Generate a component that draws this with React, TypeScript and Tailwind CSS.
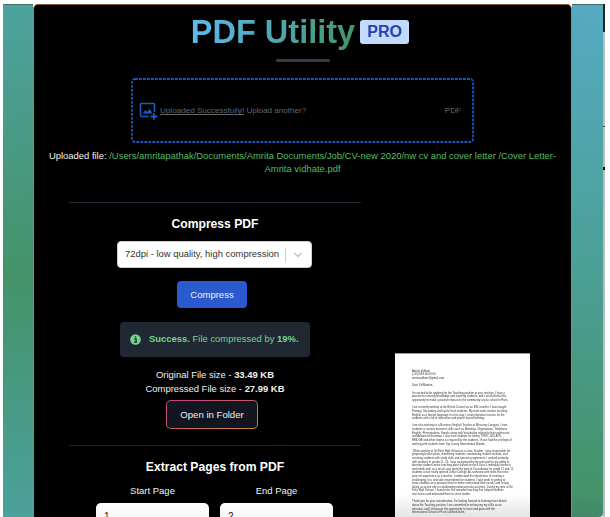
import React from "react";

const paragraphs: string[][] = [
  ["Amrita Vidhate", "(+33) 648 00 00 00", "amritavidhate@gmail.com"],
  ["Dear Sir/Madam,"],
  [
    "I'm excited to be applying for the Teaching position at your institute. I have a",
    "passion for sharing knowledge and inspiring students, and I am thrilled at the",
    "opportunity to make a positive impact on the community at you school in Paris.",
  ],
  [
    "I am currently working at the British Council as an ESL teacher. I have taught",
    "Primary, Secondary and Lycée level students. My main tasks involve teaching",
    "English as a foreign language in a fun way. I create dynamic lessons for the",
    "students with a lot of interactive and project based learning.",
  ],
  [
    "I am also working as a Business English Teacher at Mercurey Langues. I train",
    "students in various business skills such as Meetings, Negotiations, Telephone",
    "English, Presentations, Emails along with Vocabulary related to their profession",
    "and Advanced Grammar. I also train students for taking TOEIC, BULATS,",
    "BRIDGE and other exams as required by the students. I have had the privilege of",
    "working with students from Top Luxury International Brands.",
  ],
  [
    " While working at Sri Felix High School as a class Teacher, I was responsible for",
    "preparing lesson plans, monitoring students, maintaining student records, and",
    "assisting students with study skills and special assignments. I worked primarily",
    "with students in grades 8 - 12. I was recognized by my principal for my ability to",
    "develop student-centric teaching plans based on each class's individual interests",
    "and needs and, as a result, was given the post of Co-ordinator for grade 11 and 12",
    "students at our newly opened Junior College. As someone with more than nine",
    "years of experience as a teacher, I understand the importance of creating a",
    "challenging, fun, and safe environment for students. I take pride in getting to",
    "know students on a personal level to better understand their needs, and I enjoy",
    "taking an active role in coordinating extracurricular activities. During my time at Sri",
    "Felix High School, I found roles like remedial teaching that helped students",
    "real scores and motivated them to strive harder.",
  ],
  [
    "Thank you for your consideration. I'm looking forward to learning more details",
    "about the Teaching position. I am committed to enhancing my skills as an",
    "educator, and I'd treasure the opportunity to learn and grow with the",
    "International School of Paris talented team.",
  ],
];

function Letter() {
  return (
    <div className="mt-[177px] ml-[34px] h-[165px] w-[135px] shrink-0 overflow-hidden border-t border-[#999] bg-gradient-to-b from-white from-85% to-[#e4e4e4]">
      <div className="mt-[15px] ml-[16.5px] h-0 w-[460px] origin-top-left scale-25 text-[11.1px] leading-[14.4px] whitespace-pre text-[#333]">
        {paragraphs.map((lines, i) => (
          <div key={i} className="mb-[15px]">
            {lines.map((line) => (
              <div key={line}>{line}</div>
            ))}
          </div>
        ))}
      </div>
    </div>
  );
}

function UploadIcon() {
  return (
    <svg viewBox="0 0 19 18" className="h-[18px] w-[19px] shrink-0" fill="none">
      <path d="M9.5 14.5H2.500a1 1 0 0 1-1-1V2.500a1 1 0 0 1 1-1h12a1 1 0 0 1 1 1V10" stroke="#1d5cc6" strokeWidth="1.6" />
      <path d="M3.8 11.5 6.5 8l1.800 1.900L10.500 6.800l3.200 4.700Z" fill="#1d5cc6" />
      <path d="M15 11.200v6.600M11.700 14.500h6.600" stroke="#1d5cc6" strokeWidth="1.8" />
    </svg>
  );
}

function PageField({ label, value }: { label: string; value: string }) {
  return (
    <div className="w-[113px]">
      <div className="text-center text-[9.5px] leading-[14px]">{label}</div>
      <div className="mt-[5px] h-[27px] rounded-[5px] bg-gradient-to-b from-white to-[#ececf0] pt-[7px] pl-[8px] text-[10px] leading-[14px] text-[#222]">
        {value}
      </div>
    </div>
  );
}

export default function App() {
  return (
    <div className="flex h-[517px] w-[610px] overflow-hidden bg-white pt-[4px] pl-[3px] font-['Liberation_Sans',Arial,sans-serif] text-[#f0f0f0]">
      <div className="h-[513px] w-[30px] shrink-0 border-t border-[#3e706d] bg-[linear-gradient(176deg,#4da29e_0%,#44936a_53%,#4ba19b_100%)]" />
      <div className="h-[513px] w-[539px] shrink-0 overflow-hidden rounded-t-[5px] border border-b-0 border-[#c07c42] border-t-[#8a5a36] bg-black">
        <div className="flex h-[49px] justify-center pt-[7px] pr-[5px]">
          <h1 className="h-[43px] bg-gradient-to-r from-[#5db9f0] via-[#52a7b0] to-[#42946a] bg-clip-text text-[32.5px] leading-[41px] font-bold whitespace-nowrap text-transparent">
            PDF Utility
          </h1>
          <span className="mt-[8px] ml-[5px] h-[24px] w-[49px] rounded-[3px] bg-[#c3dafd] text-center text-[16px] leading-[24px] font-bold text-[#2544ad]">
            PRO
          </span>
        </div>
        <div className="mx-auto mt-[5px] h-[3px] w-[54px] rounded-full bg-[#343b4a]" />
        <div className="relative mt-[16px] ml-[97px] flex h-[65px] w-[343px] items-center pr-[13px] pl-[8px] text-[8.1px] text-[#666]">
          <svg className="absolute inset-0 h-[65px] w-[343px]" fill="none">
            <rect x="1" y="1" width="341" height="63" rx="3" stroke="#1957bd" strokeWidth="1.8" strokeDasharray="2.8 1.2" />
          </svg>
          <UploadIcon />
          <span className="mt-[2px] ml-[2px]">
            <span className="underline">Uploaded Successfully!</span> Upload another?
          </span>
          <span className="mt-[2px] ml-auto">PDF</span>
        </div>
        <p className="mt-[6px] text-center text-[9.45px] leading-[13px] whitespace-nowrap">
          Uploaded file:{" "}
          <span className="text-[#52bd62]">
            /Users/amritapathak/Documents/Amrita Documents/Job/CV-new 2020/nw cv and cover letter /Cover Letter-
            <br />
            Amrita vidhate.pdf
          </span>
        </p>
        <div className="mt-px flex pl-[35px]">
          <div className="w-[292px] shrink-0 pt-[26px]">
            <div className="h-px bg-[#242b38]" />
            <h2 className="mt-[12px] text-center text-[12.15px] leading-[18px] font-bold text-white">Compress PDF</h2>
            <div className="mt-[8px] ml-[48px] flex h-[27px] w-[195px] items-center rounded-[4px] border border-[#ccc] bg-white text-[#333]">
              <span className="ml-[7px] text-[9.45px] whitespace-nowrap">72dpi - low quality, high compression</span>
              <span className="ml-auto h-[14px] w-px bg-[#ccc]" />
              <svg viewBox="0 0 10 8" className="mr-[8px] ml-[7px] h-[8px] w-[10px] shrink-0" fill="none">
                <path d="m1.500 2 3.500 3.500L8.500 2" stroke="#c4c4c4" strokeWidth="1.5" />
              </svg>
            </div>
            <div className="mt-[13px] ml-[108px] h-[27px] w-[70px] rounded-[4px] bg-[#2b5ace] text-center text-[9.5px] leading-[27px]">
              Compress
            </div>
            <div className="mt-[14px] ml-[51px] flex h-[35px] w-[190px] items-center rounded-[4px] bg-[#202834] text-[9.45px] whitespace-nowrap text-[#70d58a]">
              <svg viewBox="0 0 11 11" className="mr-[8px] ml-[10px] h-[11px] w-[11px] shrink-0">
                <circle cx="5.5" cy="5.5" r="5.300" fill="#70d58a" />
                <path d="M4.200 4.800h1.900v3M4 8.200h3M5.500 2.200v1.400" stroke="#202834" strokeWidth="1.3" fill="none" />
              </svg>
              <span>
                <b>Success.</b> File compressed by <b>19%.</b>
              </span>
            </div>
            <div className="mt-[11px] text-center text-[9.45px] leading-[13.5px]">
              Original File size - <b>33.49 KB</b>
              <br />
              Compressed File size - <b>27.99 KB</b>
            </div>
            <div className="mt-[5px] ml-[97px] h-[29px] w-[92px] rounded-[5px] bg-gradient-to-br from-[#c04084] via-[#c85d62] to-[#cc8131] p-px">
              <div className="h-full rounded-[4px] bg-[#111621] text-center text-[9.6px] leading-[27px]">Open in Folder</div>
            </div>
            <div className="mt-[16px] h-px bg-[#1d232d]" />
            <h2 className="mt-[12px] text-center text-[12.15px] leading-[18px] font-bold text-white">Extract Pages from PDF</h2>
            <div className="mt-[8px] ml-[27px] flex gap-[11px]">
              <PageField label="Start Page" value="1" />
              <PageField label="End Page" value="2" />
            </div>
          </div>
          <Letter />
        </div>
      </div>
      <div className="h-[513px] w-[31px] shrink-0 rounded-br-[4px] border-t border-[#3e706d] bg-[linear-gradient(184deg,#55aac1_0%,#4ca19c_45%,#44936a_95%,#43886a_100%)]" />
      <div className="h-[513px] w-[2px] shrink-0 bg-[linear-gradient(#222_0_28px,#bbb_28px_122px,#444_122px_123px,#bbb_123px_163px,#111_163px_166px,#bbb_166px)]" />
    </div>
  );
}
